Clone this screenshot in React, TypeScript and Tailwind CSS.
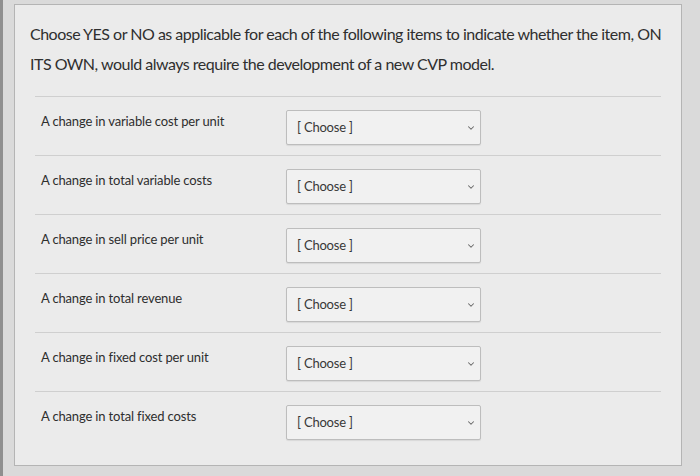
import { ChevronDown } from 'lucide-react'

const ITEMS = [
  'A change in variable cost per unit',
  'A change in total variable costs',
  'A change in sell price per unit',
  'A change in total revenue',
  'A change in fixed cost per unit',
  'A change in total fixed costs',
]

const ChooseSelect = () => (
  <div className="flex h-[35px] w-[195px] items-center justify-between rounded-[2px] border border-[#bdbdbd] bg-[#f1f1f1] pl-[10px] pr-[4px] shadow-[0_1px_1px_rgba(0,0,0,0.08)]">
    <span className="text-[13px] tracking-[-0.2px] text-[#383838]">[ Choose ]</span>
    <ChevronDown className="h-[10px] w-[10px] text-[#666]" strokeWidth={2.5} />
  </div>
)

const App = () => {
  return (
    <div
      className="h-[476px] w-[700px] overflow-hidden border-l-[3px] border-[#8f8f8f] bg-[#dadada] pl-[11px] pt-[4px]"
      style={{ fontFamily: 'Lato, "Liberation Sans", sans-serif' }}
    >
      <div className="h-[462px] w-[668px] border border-[#b4b4b4] bg-[#ebebeb]">
        <p className="px-[15px] pt-[14px] text-[16px] leading-[30px] tracking-[-0.5px] text-[#2f2f2f]">
          Choose YES or NO as applicable for each of the following items to indicate whether the item, ON
          ITS OWN, would always require the development of a new CVP model.
        </p>
        <div className="mx-[20px] mt-[17px]">
          {ITEMS.map((label) => (
            <div key={label} className="flex h-[59px] items-start border-t border-[#cfcfcf] pt-[13px]">
              <div className="w-[251px] pl-[6px] pt-[2px] text-[13px] tracking-[-0.15px] text-[#2e2e2e]">
                {label}
              </div>
              <ChooseSelect />
            </div>
          ))}
        </div>
      </div>
    </div>
  )
}

export default App
